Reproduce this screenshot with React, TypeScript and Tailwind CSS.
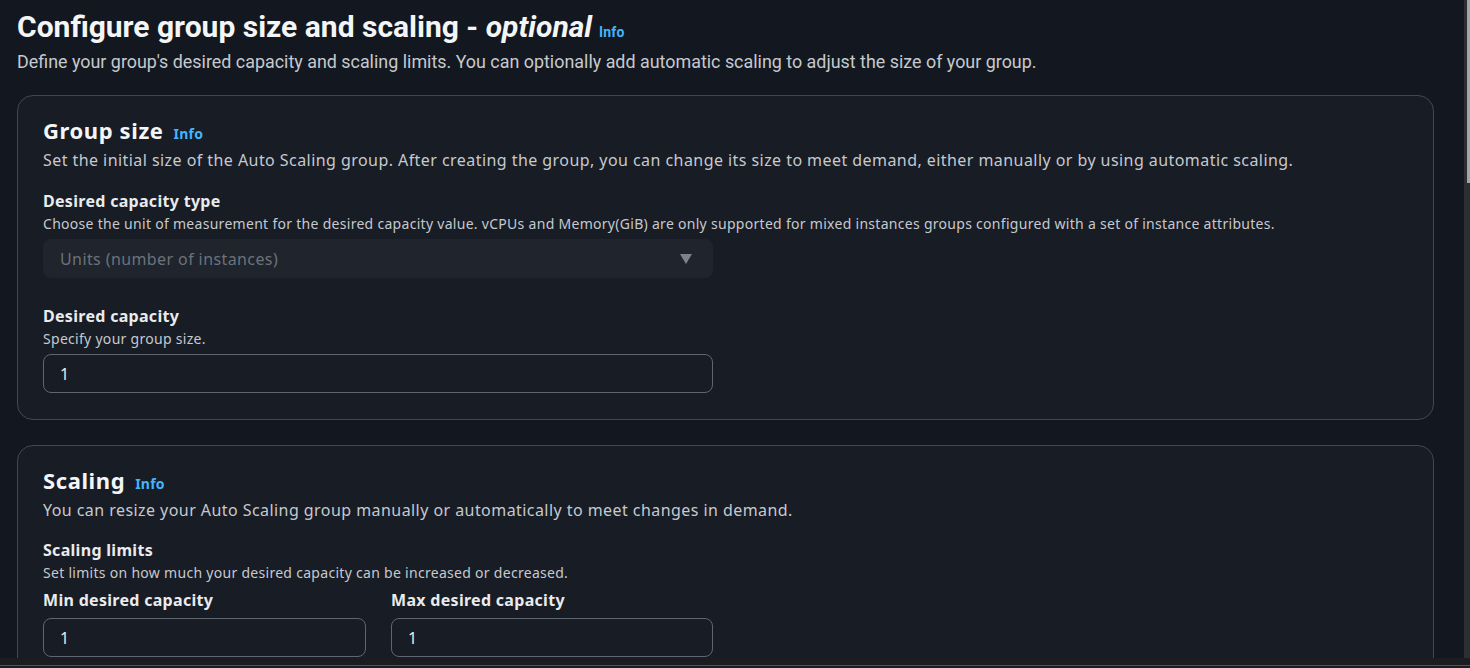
import { ReactNode } from 'react'

const body = { fontFamily: '"Noto Sans", "Open Sans", sans-serif' }
const top = { fontFamily: 'Roboto, "Noto Sans", sans-serif' }

function Info() {
  return <span className="text-[14px] font-bold text-[#42b4ff] leading-none tracking-[0.2px]">Info</span>
}

function Card({ children }: { children: ReactNode }) {
  return (
    <div className="w-[1417px] shrink-0 rounded-[16px] border border-[#424852] bg-[#171c25] px-[25px] pt-[19px] pb-[26px]">
      {children}
    </div>
  )
}

function Heading({ title }: { title: string }) {
  return (
    <div className="flex items-baseline gap-[10px] h-[31px]">
      <h2 className="text-[22px] font-bold leading-[30px] tracking-[0.6px] text-[#f4f5f6]">{title}</h2>
      <Info />
    </div>
  )
}

function Label({ text, className = '' }: { text: string; className?: string }) {
  return <div className={`text-[16px] font-bold leading-[22px] tracking-[0.3px] text-[#e9ebed] ${className}`}>{text}</div>
}

function Help({ text }: { text: string }) {
  return <div className="mt-[2px] text-[14px] leading-[20px] tracking-[0.29px] text-[#c6c9ce]">{text}</div>
}

function NumberInput({ value, width }: { value: string; width: string }) {
  return (
    <div className={`${width} h-[39px] rounded-[8px] border border-[#5f6670] bg-[#171c25] flex items-center pl-[16px] text-[16px] text-[#e9ebed]`}>
      {value}
    </div>
  )
}

export default function App() {
  return (
    <div className="h-[668px] w-full overflow-hidden bg-[#131820] flex flex-col" style={body}>
      <div className="flex h-[658px]">
        <main className="flex-1 overflow-hidden pl-[17px] pt-[9px]">
          {/* page header */}
          <div className="flex items-baseline gap-[7px] h-[36px]" style={top}>
            <h1 className="text-[30px] font-bold leading-[36px] text-[#f4f5f6] whitespace-nowrap">
              Configure group size and scaling - <i className="font-bold">optional</i>
            </h1>
            <Info />
          </div>
          <p className="mt-[5px] text-[17.9px] leading-[24px] text-[#c6c9ce] whitespace-nowrap" style={top}>
            Define your group's desired capacity and scaling limits. You can optionally add automatic scaling to adjust the size of your group.
          </p>

          <div className="mt-[21px] flex flex-col gap-[25px]">
            {/* group size */}
            <Card>
              <Heading title="Group size" />
              <p className="mt-[2px] text-[16px] leading-[24px] tracking-[0.44px] text-[#c6c9ce]">
                Set the initial size of the Auto Scaling group. After creating the group, you can change its size to meet demand, either manually or by using automatic scaling.
              </p>

              <Label text="Desired capacity type" className="mt-[18px]" />
              <Help text="Choose the unit of measurement for the desired capacity value. vCPUs and Memory(GiB) are only supported for mixed instances groups configured with a set of instance attributes." />
              <div className="mt-[5px] w-[670px] h-[39px] rounded-[8px] bg-[#1f242d] flex items-center justify-between pl-[17px] pr-[21px]">
                <span className="text-[16px] tracking-[0.4px] text-[#6c727b]">Units (number of instances)</span>
                <svg width="12" height="10" viewBox="0 0 12 10">
                  <path d="M0 0h12L6 10z" fill="#7d838c" />
                </svg>
              </div>

              <Label text="Desired capacity" className="mt-[27px]" />
              <Help text="Specify your group size." />
              <div className="mt-[5px]">
                <NumberInput value="1" width="w-[670px]" />
              </div>
            </Card>

            {/* scaling */}
            <Card>
              <Heading title="Scaling" />
              <p className="mt-[2px] text-[16px] leading-[24px] tracking-[0.44px] text-[#c6c9ce]">
                You can resize your Auto Scaling group manually or automatically to meet changes in demand.
              </p>

              <Label text="Scaling limits" className="mt-[17px]" />
              <Help text="Set limits on how much your desired capacity can be increased or decreased." />
              <div className="mt-[6px] flex gap-[25px]">
                <div>
                  <Label text="Min desired capacity" />
                  <div className="mt-[7px]">
                    <NumberInput value="1" width="w-[323px]" />
                  </div>
                </div>
                <div>
                  <Label text="Max desired capacity" />
                  <div className="mt-[7px]">
                    <NumberInput value="1" width="w-[322px]" />
                  </div>
                </div>
              </div>
            </Card>
          </div>
        </main>

        {/* vertical scrollbar */}
        <div className="w-[6px] flex flex-col bg-[#2c2e31]">
          <div className="h-[183px] ml-[3px] bg-[#a3a5a8]" />
        </div>
      </div>

      {/* horizontal scrollbar strip */}
      <div className="h-[10px] bg-[#1a1d22] flex flex-col justify-end">
        <div className="h-[1px] mb-[2px] bg-[#4f545b]" />
      </div>
    </div>
  )
}
